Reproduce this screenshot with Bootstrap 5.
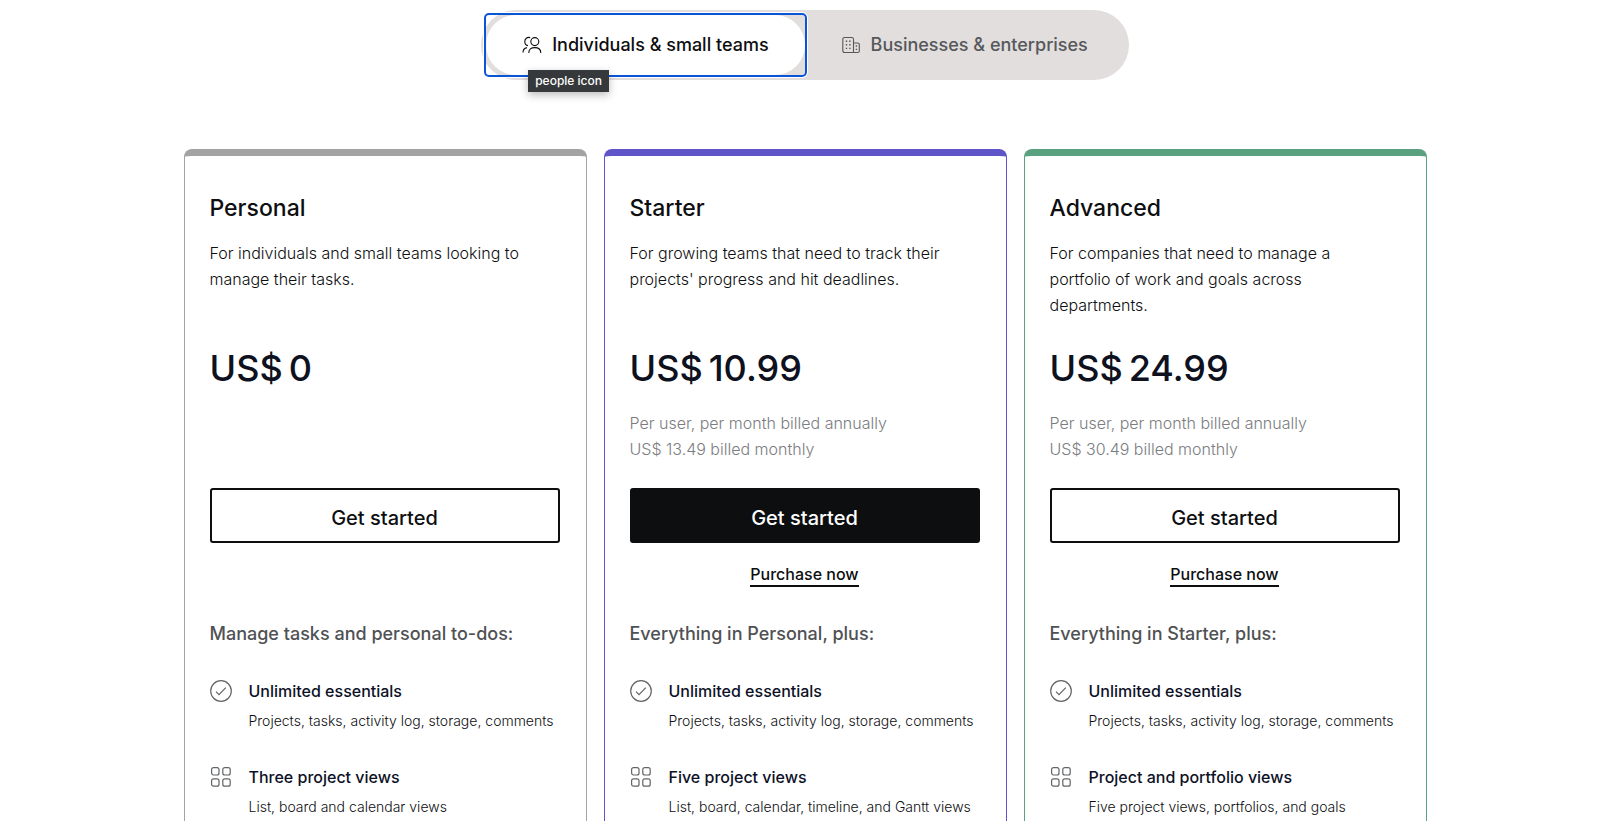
<!DOCTYPE html>
<html lang="en">
<head>
<meta charset="utf-8">
<meta name="viewport" content="width=device-width, initial-scale=1">
<title>Pricing</title>
<link href="https://cdn.jsdelivr.net/npm/bootstrap@5.3.0/dist/css/bootstrap.min.css" rel="stylesheet">
<style>
  body { font-family: Inter, "Liberation Sans", sans-serif; color: #0d0e10; background: #fff; }
  .page { min-height: 100vh; padding: 10px 16px 0 26px; }
  .switcher { background: #e1dedd; border-radius: 35px; padding: 5px; height: 70px; }
  .switch-tab { border: 0; border-radius: 30px; background: transparent; color: #56585b; font-size: 18px; line-height: 28px; font-weight: 500; padding: 0 36px; }
  .switch-tab .tab-icon { width: 20px; height: 20px; margin-right: 10px; }
  .switch-tab[aria-selected="true"] { background: #fff; color: #0d0e10; }
  .focus-box { border-radius: 3px; box-shadow: 0 0 0 2px #0a55d6, 0 0 0 3px #fff; }
  .hint { position: absolute; left: 42px; top: 55px; background: #36393b; color: #fff; font-size: 12px; line-height: 22px; padding: 0 7px; font-weight: 500; box-shadow: 0 3px 8px #0004; z-index: 2; white-space: nowrap; }
  .plans { width: 100%; max-width: 1243px; display: grid; grid-template-columns: repeat(auto-fit, minmax(340px, 1fr)); gap: 17px; margin-top: 69px; }
  .plan { --tone: #a3a3a3; border: 1px solid var(--tone); border-top-width: 7px; border-bottom: 0; border-radius: 8px 8px 0 0; padding: 36px 26px 0 25px; }
  .plan-starter { --tone: #5f55c8; }
  .plan-advanced { --tone: #5aa17f; }
  .plan-title { font-size: 23px; line-height: 32px; font-weight: 500; margin: 0 0 16px; }
  .plan-text { font-size: 16px; line-height: 26px; min-height: 78px; max-width: 334px; margin: 0 0 26px; font-weight: 300; }
  .plan-price { font-size: 36px; line-height: 48px; font-weight: 500; margin: 0 0 18px; display: flex; gap: 6px; color: #0d1120; }
  .plan-terms { font-size: 16px; line-height: 26px; min-height: 52px; margin: 0 0 26px; font-weight: 300; color: #7b7d80; }
  .plan-btn { border: 2px solid #0d0e10; border-radius: 3px; height: 55px; padding: 4px 0 0; font-size: 20px; line-height: 28px; font-weight: 500; color: #0d0e10; background: #fff; width: 100%; }
  .plan-btn-dark { background: #0d0e10; color: #fff; }
  .buy-row { height: 67px; padding-top: 19px; margin-bottom: 10px; text-align: center; }
  .buy-row a { display: inline-block; font-size: 16px; line-height: 21px; font-weight: 500; color: #0d0e10; text-decoration: none; border-bottom: 2px solid #0d0e10; }
  .plan-sub { font-size: 18px; line-height: 28px; font-weight: 500; color: #4f5154; margin: 0 0 30px; }
  .feature { display: grid; grid-template-columns: 22px 1fr; column-gap: 17px; margin-bottom: 31px; }
  .feature svg { width: 22px; height: 22px; margin-top: 2px; }
  .feature h4 { font-size: 16px; line-height: 26px; font-weight: 500; margin: 0 0 5px; color: #0d1127; }
  .feature p { font-size: 14px; line-height: 24px; font-weight: 300; margin: 0; }
</style>
</head>
<body>
<svg class="d-none" xmlns="http://www.w3.org/2000/svg">
  <symbol id="check" viewBox="0 0 22 22"><g fill="none" stroke="#626466" stroke-width="1.2"><circle cx="11" cy="11" r="10.3"/><path d="M6 11.600l3 3 6.800-7"/></g></symbol>
  <symbol id="tiles" viewBox="0 0 22 22"><g fill="none" stroke="#626466" stroke-width="1.2"><rect x="1.600" y="1.600" width="7.400" height="7.400" rx="2"/><rect x="12.800" y="1.600" width="7.400" height="7.400" rx="2"/><rect x="1.600" y="12.800" width="7.400" height="7.400" rx="2"/><rect x="12.800" y="12.800" width="7.400" height="7.400" rx="2"/></g></symbol>
</svg>
<main class="page d-flex flex-column align-items-center">
  <div class="switcher d-flex" role="tablist">
    <div class="focus-box position-relative d-flex">
      <button class="switch-tab d-flex align-items-center" role="tab" aria-selected="true">
        <svg class="tab-icon" viewBox="0 0 20 20" fill="none" stroke="#0d0e10" stroke-width="1.1"><circle cx="12.800" cy="6.600" r="4"/><path d="M6.800 18c0-3.600 2.200-5.400 6-5.400s6 1.800 6 5.400M8.200 2.600C5 1.800 2.800 3.800 2.800 6.500c0 2 1.200 3.800 3.200 4.100M1 17.500c0-2.600 1.400-4.400 4-4.900"/></svg>
        Individuals &amp; small teams
      </button>
      <span class="hint" role="tooltip">people icon</span>
    </div>
    <button class="switch-tab d-flex align-items-center" role="tab" aria-selected="false">
      <svg class="tab-icon" viewBox="0 0 20 20" fill="none" stroke="#56585b" stroke-width="1.1"><path d="M12.500 17.500h-9A1.700 1.700 0 0 1 1.800 15.800V4.200A1.700 1.700 0 0 1 3.500 2.500h7.300a1.700 1.700 0 0 1 1.700 1.700zM12.500 8h4.200a1.600 1.600 0 0 1 1.600 1.600v6.300a1.600 1.600 0 0 1-1.600 1.600h-4.200"/><path d="M4.800 6.200h1.400m2 0h1.400M4.800 9.800h1.400m2 0h1.400M4.800 13.400h1.400m2 0h1.400M14.700 11h1.400m-1.400 3.400h1.400" stroke-width="1.400"/></svg>
      Businesses &amp; enterprises
    </button>
  </div>

  <div class="plans flex-grow-1">
    <section class="plan">
      <h2 class="plan-title">Personal</h2>
      <p class="plan-text">For individuals and small teams looking to manage their tasks.</p>
      <p class="plan-price"><span>US$</span><span>0</span></p>
      <p class="plan-terms"></p>
      <button class="plan-btn">Get started</button>
      <div class="buy-row"></div>
      <h3 class="plan-sub">Manage tasks and personal to-dos:</h3>
      <div class="feature"><svg><use href="#check"/></svg><div><h4>Unlimited essentials</h4><p>Projects, tasks, activity log, storage, comments</p></div></div>
      <div class="feature mb-0"><svg><use href="#tiles"/></svg><div><h4>Three project views</h4><p>List, board and calendar views</p></div></div>
    </section>
    <section class="plan plan-starter">
      <h2 class="plan-title">Starter</h2>
      <p class="plan-text">For growing teams that need to track their projects' progress and hit deadlines.</p>
      <p class="plan-price"><span>US$</span><span>10.99</span></p>
      <p class="plan-terms">Per user, per month billed annually<br>US$ 13.49 billed monthly</p>
      <button class="plan-btn plan-btn-dark">Get started</button>
      <div class="buy-row"><a href="#">Purchase now</a></div>
      <h3 class="plan-sub">Everything in Personal, plus:</h3>
      <div class="feature"><svg><use href="#check"/></svg><div><h4>Unlimited essentials</h4><p>Projects, tasks, activity log, storage, comments</p></div></div>
      <div class="feature mb-0"><svg><use href="#tiles"/></svg><div><h4>Five project views</h4><p>List, board, calendar, timeline, and Gantt views</p></div></div>
    </section>
    <section class="plan plan-advanced">
      <h2 class="plan-title">Advanced</h2>
      <p class="plan-text">For companies that need to manage a portfolio of work and goals across departments.</p>
      <p class="plan-price"><span>US$</span><span>24.99</span></p>
      <p class="plan-terms">Per user, per month billed annually<br>US$ 30.49 billed monthly</p>
      <button class="plan-btn">Get started</button>
      <div class="buy-row"><a href="#">Purchase now</a></div>
      <h3 class="plan-sub">Everything in Starter, plus:</h3>
      <div class="feature"><svg><use href="#check"/></svg><div><h4>Unlimited essentials</h4><p>Projects, tasks, activity log, storage, comments</p></div></div>
      <div class="feature mb-0"><svg><use href="#tiles"/></svg><div><h4>Project and portfolio views</h4><p>Five project views, portfolios, and goals</p></div></div>
    </section>
  </div>
</main>
<script src="https://cdn.jsdelivr.net/npm/bootstrap@5.3.0/dist/js/bootstrap.bundle.min.js"></script>
</body>
</html>
